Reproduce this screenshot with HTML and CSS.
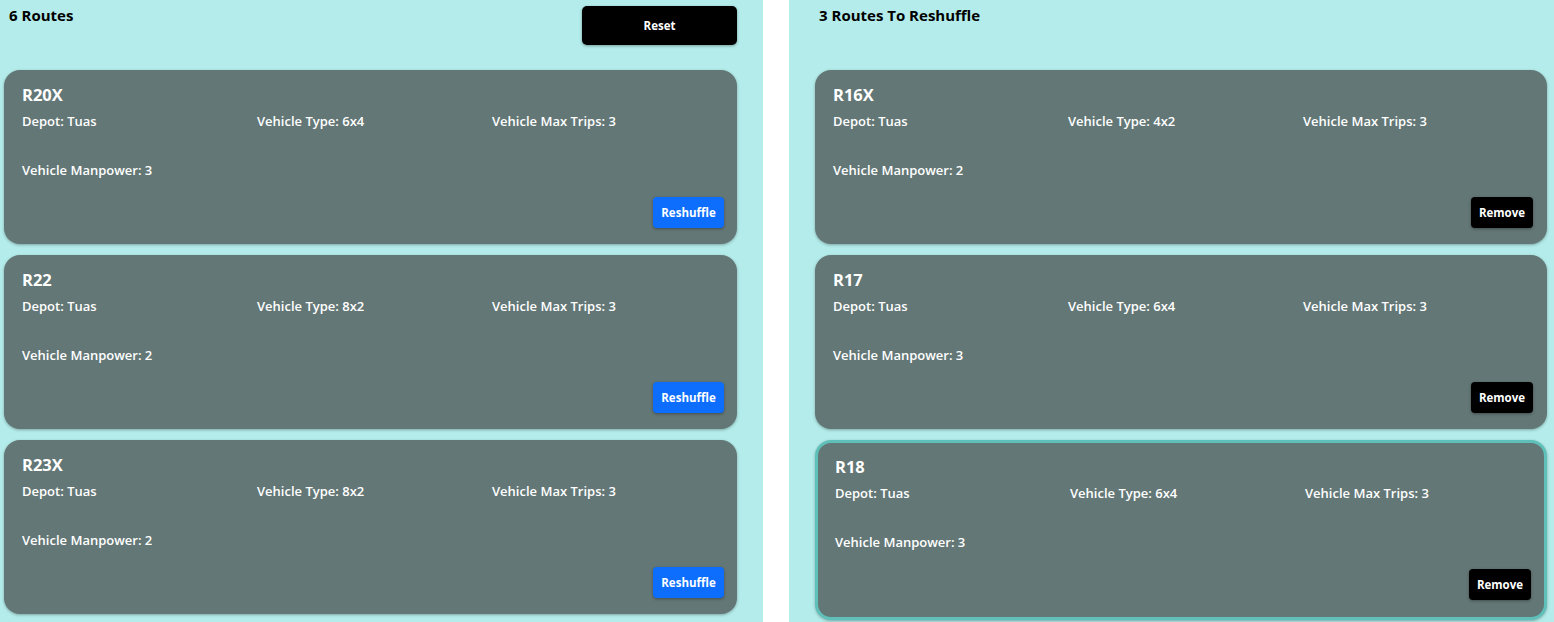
FILE: index.html
```html
<!DOCTYPE html>
<html>
<head>
<meta charset="utf-8">
<link rel="stylesheet" href="styles.css">
</head>
<body>
<div class="layout">
  <section class="panel panel-left">
    <div class="panel-head">
      <h2 class="panel-title">6 Routes</h2>
      <button class="btn btn-reset">Reset</button>
    </div>
    <div class="card-list">
      <div class="card">
        <div class="card-title">R20X</div>
        <div class="info">
          <span>Depot: Tuas</span><span>Vehicle Type: 6x4</span><span>Vehicle Max Trips: 3</span>
          <span>Vehicle Manpower: 3</span>
        </div>
        <div class="card-actions"><button class="btn btn-blue">Reshuffle</button></div>
      </div>
      <div class="card">
        <div class="card-title">R22</div>
        <div class="info">
          <span>Depot: Tuas</span><span>Vehicle Type: 8x2</span><span>Vehicle Max Trips: 3</span>
          <span>Vehicle Manpower: 2</span>
        </div>
        <div class="card-actions"><button class="btn btn-blue">Reshuffle</button></div>
      </div>
      <div class="card">
        <div class="card-title">R23X</div>
        <div class="info">
          <span>Depot: Tuas</span><span>Vehicle Type: 8x2</span><span>Vehicle Max Trips: 3</span>
          <span>Vehicle Manpower: 2</span>
        </div>
        <div class="card-actions"><button class="btn btn-blue">Reshuffle</button></div>
      </div>
    </div>
  </section>
  <section class="panel panel-right">
    <div class="panel-head">
      <h2 class="panel-title">3 Routes To Reshuffle</h2>
    </div>
    <div class="card-list">
      <div class="card">
        <div class="card-title">R16X</div>
        <div class="info">
          <span>Depot: Tuas</span><span>Vehicle Type: 4x2</span><span>Vehicle Max Trips: 3</span>
          <span>Vehicle Manpower: 2</span>
        </div>
        <div class="card-actions"><button class="btn btn-black">Remove</button></div>
      </div>
      <div class="card">
        <div class="card-title">R17</div>
        <div class="info">
          <span>Depot: Tuas</span><span>Vehicle Type: 6x4</span><span>Vehicle Max Trips: 3</span>
          <span>Vehicle Manpower: 3</span>
        </div>
        <div class="card-actions"><button class="btn btn-black">Remove</button></div>
      </div>
      <div class="card card-active">
        <div class="card-title">R18</div>
        <div class="info">
          <span>Depot: Tuas</span><span>Vehicle Type: 6x4</span><span>Vehicle Max Trips: 3</span>
          <span>Vehicle Manpower: 3</span>
        </div>
        <div class="card-actions"><button class="btn btn-black">Remove</button></div>
      </div>
    </div>
  </section>
</div>
</body>
</html>
```
FILE: styles.css
```css
* { box-sizing: border-box; }
html, body { margin: 0; padding: 0; background: #ffffff; }
body {
  font-family: "Open Sans", "Noto Sans", "Liberation Sans", sans-serif;
  color: #fff;
  height: 622px;
  overflow: hidden;
}
.layout {
  display: flex;
  gap: 26px;
  height: 100%;
}
.panel {
  background: #b3ecea;
  height: 100%;
}
.panel-left { width: 763px; padding: 0 26px 0 4px; }
.panel-right { flex: 1; padding: 0 7px 0 26px; }
.panel-head {
  height: 70px;
  display: flex;
  justify-content: space-between;
  align-items: flex-start;
}
.panel-title {
  margin: 5px 0 0 5px;
  font-size: 15px;
  line-height: 20px;
  font-weight: 700;
  color: #000;
}
.panel-right .panel-title { margin-left: 4px; }
.btn {
  font-family: inherit;
  font-weight: 700;
  font-size: 11.5px;
  color: #fff;
  border: none;
  border-radius: 4px;
  cursor: pointer;
  box-shadow: 0 1px 3px rgba(0,0,0,0.35);
}
.btn-reset {
  margin-top: 6px;
  width: 155px;
  height: 39px;
  background: #000;
  border-radius: 5px;
}
.card-list {
  display: flex;
  flex-direction: column;
  gap: 11px;
}
.card {
  background: #637776;
  border-radius: 16px;
  padding: 14px 13px 16px 18px;
  box-shadow: 0 1px 3px rgba(0,0,0,0.3);
}
.card-active {
  border: 3px solid #5fc0ba;
  padding: 13px 13px 17px 17px;
}
.card-title {
  font-size: 16.5px;
  line-height: 22px;
  font-weight: 700;
}
.info {
  margin-top: 5px;
  display: grid;
  grid-template-columns: 235px 235px 1fr;
  row-gap: 29px;
  font-size: 13px;
  line-height: 20px;
  font-weight: 600;
}
.card-actions {
  margin-top: 17px;
  display: flex;
  justify-content: flex-end;
}
.btn-blue {
  background: #0d6efd;
  height: 31px;
  width: 71px;
  padding: 0;
}
.btn-black {
  background: #000;
  height: 31px;
  width: 62px;
  padding: 0;
  margin-right: 1px;
}
.card-active .btn-black { margin-right: 0; }
```
